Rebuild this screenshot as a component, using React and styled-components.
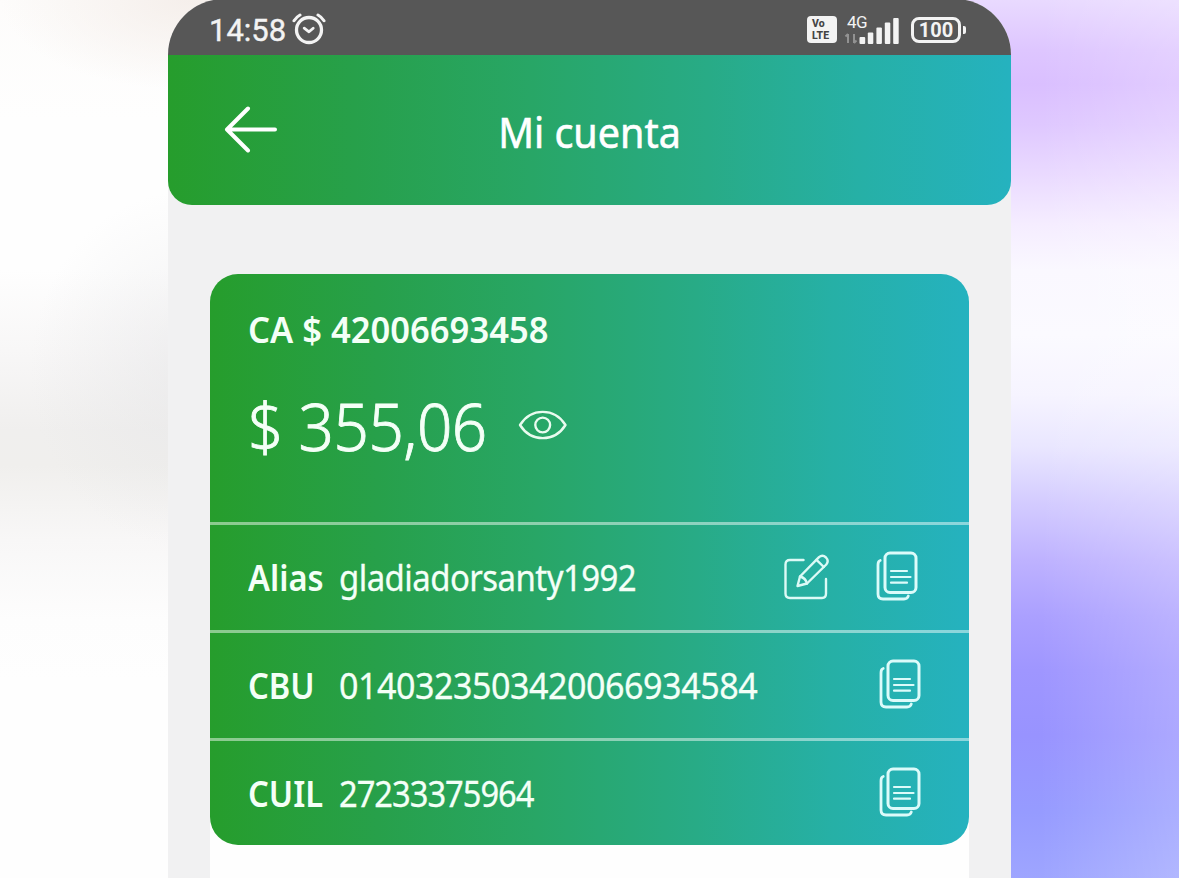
import styled, { createGlobalStyle } from 'styled-components';

const gradient = 'linear-gradient(90deg, #269d2c 0%, #27a04a 22%, #28a666 43%, #28ab86 64%, #26b0a6 82%, #25b2bf 100%)';

const AlarmIcon = () => (
    <svg width="34" height="34" viewBox="0 0 34 34" fill="none" stroke="#f3f3f3" strokeLinecap="round" strokeLinejoin="round">
        <circle cx="17" cy="18" r="12.5" strokeWidth="3.3" />
        <path d="M12.2 16.2 L17 19.8 L21.2 16.2" strokeWidth="2.8" />
        <path d="M2 8.8 Q4.2 5 8 3 M26 3 Q29.8 5 32 8.8" strokeWidth="3" />
    </svg>
);

const SignalIcon = () => (
    <svg width="55" height="30" viewBox="0 0 55 30" fill="#f3f3f3">
        <path d="M4 19 V28 M1.5 21.5 L4 19 M10 19 V28 M10 28 L12.5 25.5" stroke="#929292" strokeWidth="2" fill="none" />
        <rect x="15.5" y="22" width="5.7" height="7" rx="1" />
        <rect x="23.8" y="17.5" width="5.5" height="11.5" rx="1" />
        <rect x="32.4" y="12.5" width="5.5" height="16.5" rx="1" />
        <rect x="40.8" y="7.5" width="5.5" height="21.5" rx="1" />
        <rect x="49.2" y="3" width="5.5" height="26" rx="1" />
    </svg>
);

const BackIcon = () => (
    <svg width="54" height="50" viewBox="0 0 54 50" fill="none" stroke="#fff" strokeWidth="4" strokeLinecap="round" strokeLinejoin="round">
        <path d="M25 3.5 L4 24.5 L25 45.5 M4.5 24.5 H52" />
    </svg>
);

const EyeIcon = () => (
    <svg width="50" height="32" viewBox="0 0 50 32" fill="none" stroke="#e9fbef" strokeWidth="2.4" strokeLinejoin="round">
        <path d="M2 16 C13 -1.5 36.5 -1.5 47.5 16 C36.5 33.5 13 33.5 2 16 Z" />
        <circle cx="24.7" cy="16" r="7.4" />
    </svg>
);

const EditIcon = () => (
    <svg width="48" height="48" viewBox="0 -2 48 48" fill="none" stroke="#dcfaf6" strokeWidth="2.4" strokeLinecap="round" strokeLinejoin="round">
        <path d="M19.5 6 H6 Q1.500 6 1.500 10.500 V39.500 Q1.500 44 6 44 H38 Q42 44 42 39.500 V25" />
        <path d="M13.500 32 L16 22.500 L35 3.200 Q38.500 0.300 42 3.500 Q45.200 7 42.300 10.500 L23 29.500 Z" />
        <path d="M16 22.500 Q21.700 24 23 29.500 M32.500 5.800 L39.800 13" />
    </svg>
);

const CopyIcon = () => (
    <svg width="42" height="50" viewBox="0 0 42 50" fill="none" stroke="#dcfbfa" strokeLinecap="round" strokeLinejoin="round">
        <rect x="9" y="2" width="31" height="39.5" rx="5" strokeWidth="3" />
        <path d="M4.2 9.5 Q2 10 2 14 V43 Q2 48 7 48 H28 Q31.5 48 32.3 45" strokeWidth="2.8" />
        <path d="M15 20 H31 M15 26 H34.5 M15 31.7 H31" strokeWidth="2.2" />
    </svg>
);

const rows = [
    { label: 'Alias', value: 'gladiadorsanty1992', spacing: '-0.6px', scale: 0.915, editable: true },
    { label: 'CBU', value: '0140323503420066934584', spacing: '-0.5px', scale: 0.946 },
    { label: 'CUIL', value: '27233375964', spacing: '-1.1px', scale: 0.907 },
];

const App = () => {
    return (
        <Backdrop>
            <GlobalStyle />
            <Phone>
                <StatusBar>
                    <StatusGroup>
                        <Time>14:58</Time>
                        <AlarmIcon />
                    </StatusGroup>
                    <StatusGroup>
                        <VoLte><span>Vo</span><span>LTE</span></VoLte>
                        <Network>
                            <SignalIcon />
                            <NetworkType>4G</NetworkType>
                        </Network>
                        <Battery>100</Battery>
                        <BatteryTip />
                    </StatusGroup>
                </StatusBar>
                <Header>
                    <BackIcon />
                    <Title>Mi cuenta</Title>
                </Header>
                <Content>
                    <Card>
                        <Summary>
                            <AccountNumber>CA $ 42006693458</AccountNumber>
                            <Balance>
                                <Amount>$ 355,06</Amount>
                                <EyeIcon />
                            </Balance>
                        </Summary>
                        {rows.map((row) => (
                            <Row key={row.label} $editable={row.editable}>
                                <Label>{row.label}</Label>
                                <Value $spacing={row.spacing} $scale={row.scale}>{row.value}</Value>
                                <Actions>
                                    {row.editable && <EditIcon />}
                                    <CopyIcon />
                                </Actions>
                            </Row>
                        ))}
                    </Card>
                </Content>
            </Phone>
        </Backdrop>
    );
};

export default App;

const GlobalStyle = createGlobalStyle`
    body {
        margin: 0;
        overflow: hidden;
    }
    * {
        box-sizing: border-box;
    }
    svg {
        display: block;
        flex: none;
    }
`;

const Backdrop = styled.div`
    display: grid;
    grid-template-columns: 843px;
    justify-content: center;
    height: 878px;
    overflow: hidden;
    font-family: 'Noto Sans', 'Open Sans', sans-serif;
    background:
        radial-gradient(ellipse 160px 180px at 190px 370px, rgba(228, 228, 230, 0.5) 0%, transparent 100%) 0 0 / 590px 100% no-repeat,
        radial-gradient(ellipse 190px 90px at 190px 0, #f5efeb 0%, transparent 100%) 0 0 / 590px 100% no-repeat,
        linear-gradient(180deg, #fdfcfb 0, #fefefe 120px, #fefefe 270px, #f8f7f7 350px, #f0efee 430px, #f0efed 465px, #f8f7f7 540px, #fdfdfd 620px, #fefefe 680px) 0 0 / 590px 100% no-repeat,
        linear-gradient(90deg, transparent 450px, rgba(255, 255, 255, 0.2) 589px) 100% 0 / 589px 100% no-repeat,
        linear-gradient(180deg, #e9daff 0, #dec6ff 50px, #dabfff 84px, #dfc8ff 125px, #eadaff 175px, #f5edff 225px, #faf8ff 270px, #fbfaff 335px, #f6f4ff 395px, #e9e6ff 448px, #d3cbff 504px, #beb2ff 560px, #aba0ff 616px, #9f96ff 670px, #9893ff 735px, #969bff 812px, #9ea5ff 878px) 100% 0 / 589px 100% no-repeat;
`;

const Phone = styled.div`
    height: 879px;
    margin-top: -1px;
    border-radius: 56px 56px 0 0;
    overflow: hidden;
    background: #f1f1f2;
`;

const StatusBar = styled.div`
    display: flex;
    align-items: center;
    justify-content: space-between;
    height: 56px;
    padding: 5px 45px 0 41px;
    background: #575757;
    color: #f3f3f3;
    font-family: Roboto, sans-serif;
`;

const StatusGroup = styled.div`
    display: flex;
    align-items: center;
`;

const Time = styled.span`
    width: 83px;
    padding-top: 3px;
    font-size: 31px;
    line-height: 34px;
    -webkit-text-stroke: 0.4px #f3f3f3;

    & + svg {
        margin-top: -1px;
    }
`;

const VoLte = styled.span`
    display: grid;
    align-content: center;
    width: 30px;
    height: 27px;
    margin-right: 7px;
    padding-left: 5px;
    border-radius: 4px;
    background: #f3f3f3;
    color: #444;
    font-size: 10.5px;
    font-weight: 800;
    line-height: 12px;
`;

const Network = styled.span`
    position: relative;
    margin-right: 12px;
`;

const NetworkType = styled.span`
    position: absolute;
    top: -2px;
    left: 3px;
    font-size: 17px;
    line-height: 18px;
    letter-spacing: -0.5px;
`;

const Battery = styled.span`
    display: flex;
    align-items: center;
    justify-content: center;
    width: 50px;
    height: 26px;
    border: 3px solid #f3f3f3;
    border-radius: 8px;
    font-size: 20px;
    font-weight: 700;
`;

const BatteryTip = styled.span`
    width: 3px;
    height: 8px;
    margin-left: 2px;
    border-radius: 0 2px 2px 0;
    background: #f3f3f3;
`;

const Header = styled.header`
    display: grid;
    grid-template-columns: 54px 1fr 54px;
    align-items: center;
    height: 150px;
    padding: 0 55px;
    border-radius: 0 0 24px 24px;
    background: ${gradient};
`;

const Title = styled.h1`
    margin: 3px 0 0;
    color: #fff;
    font-size: 42px;
    font-weight: 400;
    line-height: 56px;
    text-align: center;
    -webkit-text-stroke: 0.6px #fff;
    transform: scaleX(0.94);
`;

const Content = styled.main`
    height: 673px;
    margin: 69px 42px 0;
    background: linear-gradient(180deg, transparent 300px, #fefefe 300px);
`;

const Card = styled.section`
    height: 571px;
    border-radius: 28px;
    overflow: hidden;
    background: ${gradient};
    color: #f4fff7;
`;

const Summary = styled.div`
    height: 248px;
    padding: 32px 38px 0;
`;

const AccountNumber = styled.div`
    font-size: 36px;
    font-weight: 600;
    line-height: 48px;
    white-space: nowrap;
    transform: scaleX(0.96);
    transform-origin: left;
`;

const Balance = styled.div`
    display: flex;
    align-items: center;
    margin-top: 27px;
`;

const Amount = styled.span`
    width: 270px;
    font-size: 67px;
    font-weight: 300;
    line-height: 88px;
    letter-spacing: -0.5px;
    white-space: nowrap;
    -webkit-text-stroke: 0.9px #f4fff7;
    transform: scaleX(0.925);
    transform-origin: left;

    & + svg {
        margin-top: -1px;
    }
`;

const Row = styled.div`
    display: grid;
    grid-template-columns: 91px 1fr auto;
    align-items: center;
    height: 108px;
    padding: 0 ${({ $editable }) => ($editable ? '51px' : '48px')} 0 38px;
    border-top: 3px solid rgba(255, 255, 255, 0.47);
    font-size: 36px;
    line-height: 48px;
    white-space: nowrap;
`;

const Label = styled.span`
    font-weight: 600;
    transform: scaleX(0.907);
    transform-origin: left;
`;

const Value = styled.span`
    letter-spacing: ${({ $spacing }) => $spacing};
    -webkit-text-stroke: 0.3px #f4fff7;
    transform: scaleX(${({ $scale }) => $scale});
    transform-origin: left;
`;

const Actions = styled.span`
    display: flex;
    align-items: center;
    gap: 44px;
    margin-top: -4px;
`;
